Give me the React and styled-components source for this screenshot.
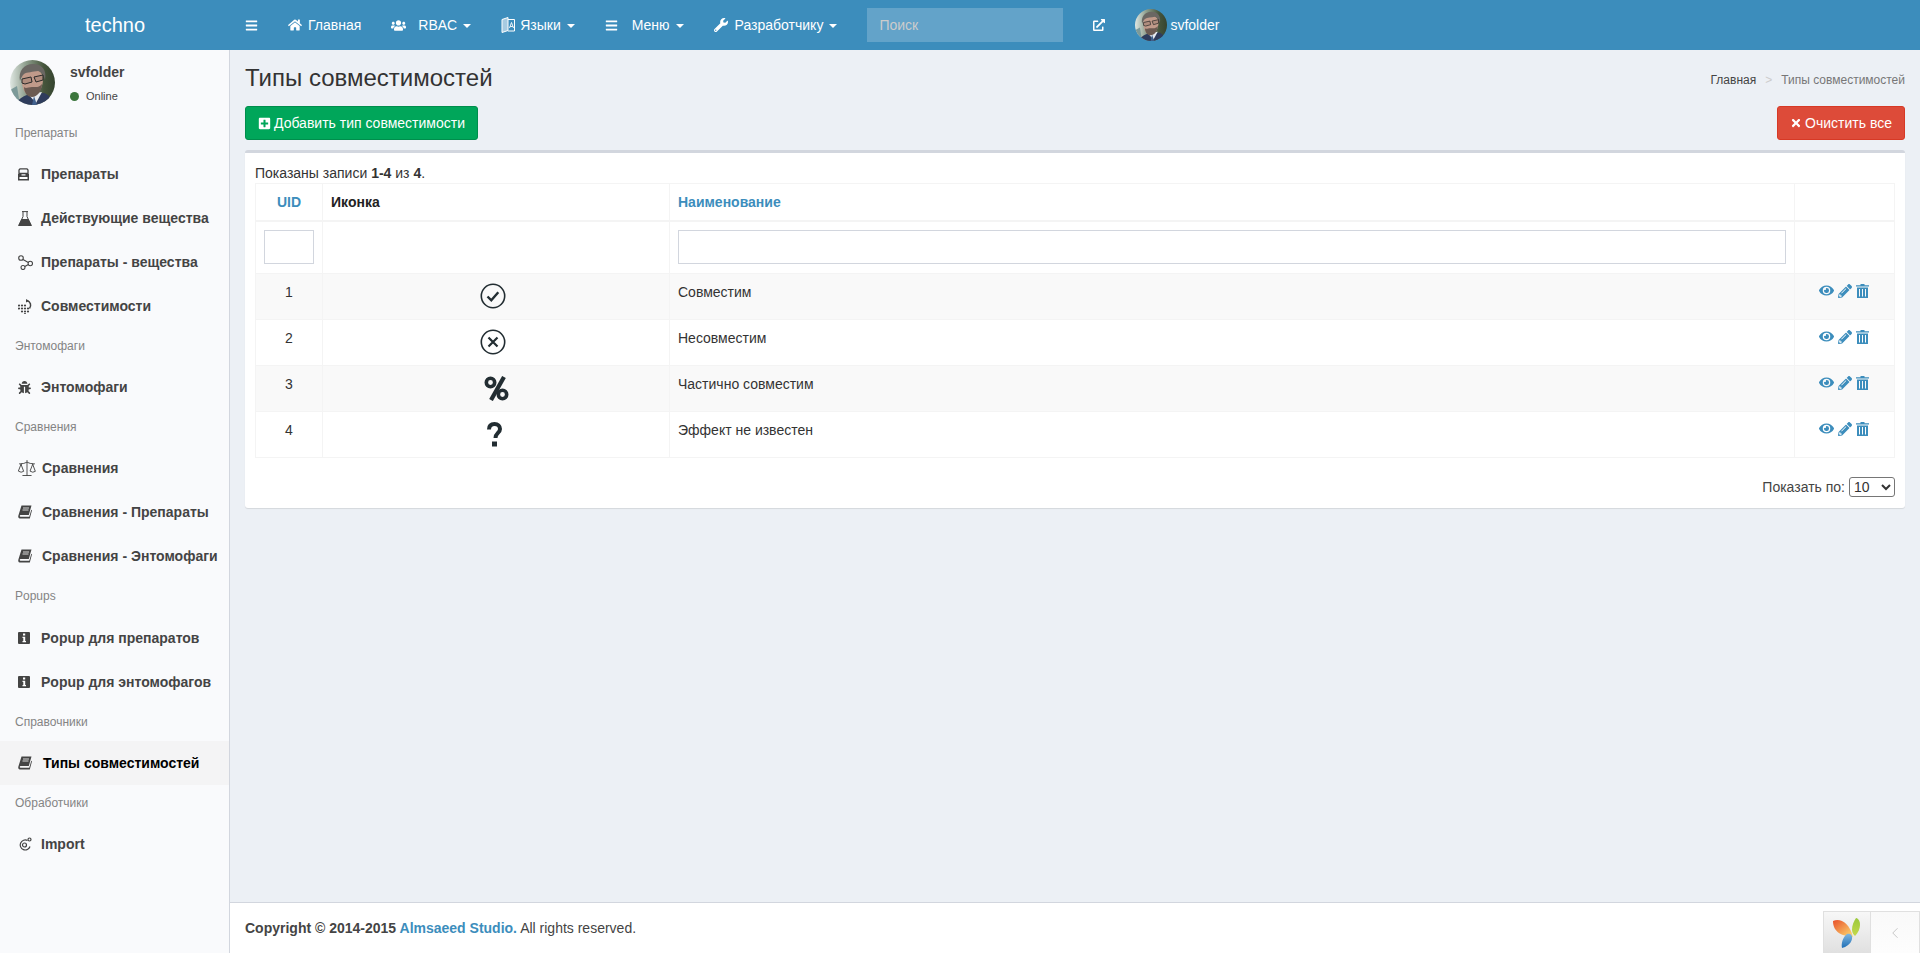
import React from "react";
import styled, { createGlobalStyle } from "styled-components";
import {
  FaBars,
  FaBug,
  FaEye,
  FaExternalLinkAlt,
  FaHome,
  FaPencilAlt,
  FaPlusSquare,
  FaTimes,
  FaUsers,
  FaWrench,
} from "react-icons/fa";
import { ChevronLeft, Scale } from "lucide-react";

const GlobalStyle = createGlobalStyle`
  * { box-sizing: border-box; }
  html, body { height: 100%; }
  body {
    margin: 0;
    background: #ecf0f5;
    color: #333;
    font-family: "Liberation Sans", Arial, sans-serif;
    font-size: 14px;
    line-height: 20px;
  }
`;

const Page = styled.div`
  display: flex;
  flex-direction: column;
  min-height: 953px;
`;

/* top bar */
const Header = styled.header`
  display: flex;
  align-items: center;
  height: 50px;
  background: #3c8dbc;
  color: #fff;
`;
const Logo = styled.div`
  width: 230px;
  text-align: center;
  font-size: 20px;
`;
const Toggle = styled.a`
  display: flex;
  padding: 15px;
  font-size: 14px;
`;
const NavLink = styled.a`
  display: flex;
  align-items: center;
  height: 50px;
  padding: 0 15px;
  color: #fff;
  svg { flex: none; }
`;
const NavIcon = styled.span`
  display: flex;
  width: ${(p) => p.$w}px;
  font-size: 14px;
`;
const Caret = styled.i`
  width: 0;
  height: 0;
  margin-left: 6px;
  margin-top: 2px;
  border-top: 4px solid #fff;
  border-left: 4px solid transparent;
  border-right: 4px solid transparent;
`;
const Search = styled.input`
  width: 196px;
  height: 34px;
  margin: 0 15px;
  padding: 6px 12px;
  border: 0;
  outline: 0;
  background: rgba(255, 255, 255, 0.2);
  color: #fff;
  font: 14px "Liberation Sans", Arial, sans-serif;
  &::placeholder { color: #ccc; opacity: 1; }
`;
const UserLink = styled(NavLink)`
  gap: 3px;
`;

/* body */
const Body = styled.div`
  display: flex;
  flex: 1;
`;
const Sidebar = styled.aside`
  flex: none;
  width: 230px;
  background: #f9fafc;
  border-right: 1px solid #d2d6de;
`;
const UserPanel = styled.div`
  display: flex;
  height: 65px;
  padding: 10px;
`;
const UserInfo = styled.div`
  margin: 2px 0 0 15px;
`;
const UserName = styled.div`
  color: #444;
  font-weight: 700;
`;
const Status = styled.div`
  display: flex;
  align-items: center;
  gap: 7px;
  margin-top: 4px;
  color: #444;
  font-size: 11px;
`;
const Dot = styled.i`
  width: 9px;
  height: 9px;
  border-radius: 50%;
  background: #3c763d;
`;
const GroupLabel = styled.div`
  height: 37.14px;
  padding: 10px 15px;
  color: #848484;
  font-size: 12px;
  line-height: 17px;
`;
const MenuItem = styled.a`
  display: flex;
  align-items: center;
  height: 44px;
  padding-left: 18px;
  color: ${(p) => (p.$active ? "#000" : "#444")};
  background: ${(p) => (p.$active ? "#f4f4f5" : "transparent")};
  font-weight: 700;
  white-space: nowrap;
`;
const MenuIcon = styled.span`
  display: flex;
  flex: none;
  align-items: center;
  width: ${(p) => p.$w || 23}px;
  color: #444;
  font-size: 14px;
`;
const ScaleIcon = styled(Scale)`
  flex: none;
  margin-left: -1px;
`;

const Main = styled.div`
  display: flex;
  flex: 1;
  flex-direction: column;
  min-width: 0;
`;
const Content = styled.main`
  flex: 1;
  padding: 15px 15px 0;
`;
const TitleRow = styled.div`
  display: flex;
  align-items: center;
  justify-content: space-between;
  height: 26px;
`;
const Title = styled.h1`
  margin: 0;
  color: #333;
  font-size: 24px;
  font-weight: 400;
  line-height: 26px;
`;
const Crumbs = styled.div`
  display: flex;
  gap: 9px;
  margin-top: 3px;
  color: #777;
  font-size: 12px;
  a { color: #444; }
  i { color: #ccc; font-style: normal; }
`;
const Actions = styled.div`
  display: flex;
  justify-content: space-between;
  margin: 15px 0 10px;
`;
const Button = styled.a`
  display: flex;
  align-items: center;
  gap: 3px;
  height: 34px;
  padding: 0 12px;
  border: 1px solid ${(p) => p.$border};
  border-radius: 3px;
  background: ${(p) => p.$bg};
  color: #fff;
`;
const Box = styled.section`
  height: 358px;
  padding: 10px;
  border-top: 3px solid #d2d6de;
  border-radius: 3px;
  background: #fff;
  box-shadow: 0 1px 1px rgba(0, 0, 0, 0.1);
`;
const Table = styled.table`
  width: 100%;
  table-layout: fixed;
  border-collapse: collapse;
  margin-bottom: 19px;
  th, td {
    padding: 8px;
    border: 1px solid #f4f4f4;
    vertical-align: top;
    text-align: left;
  }
  thead tr:first-child th { border-bottom-width: 2px; }
  tbody tr:nth-child(odd) { background: #f9f9f9; }
`;
const Th = styled.th`
  width: ${(p) => p.$w}px;
  color: ${(p) => (p.$link ? "#3c8dbc" : "#222")};
  && { text-align: ${(p) => (p.$center ? "center" : "left")}; }
`;
const NumCell = styled.td`
  && { text-align: center; }
`;
const FilterCell = styled.td`
  && { padding-bottom: 9px; }
`;
const FilterInput = styled.input`
  display: block;
  width: 100%;
  height: 34px;
  border: 1px solid #d2d6de;
  outline: 0;
  background: #fff;
`;
const IconCell = styled.td`
  && { padding: 8px 8px 9px; }
`;
const IconWrap = styled.div`
  display: flex;
  align-items: center;
  justify-content: center;
  width: 30px;
  height: 28px;
  margin-left: ${(p) => p.$left}px;
  color: #222d32;
`;
const RowActions = styled.div`
  display: flex;
  align-items: center;
  justify-content: center;
  gap: 4px;
  height: 17px;
  padding-right: 1px;
  color: #3c8dbc;
`;
const PageSize = styled.div`
  display: flex;
  align-items: center;
  justify-content: flex-end;
  gap: 4px;
  color: #444;
`;
const SizeSelect = styled.select`
  width: 46px;
  height: 20px;
  padding: 0;
  border: 1px solid #767676;
  border-radius: 3px;
  background: #fff;
  color: #333;
  font: 14px "Liberation Sans", Arial, sans-serif;
`;
const Footer = styled.footer`
  height: 51px;
  padding: 15px;
  border-top: 1px solid #d2d6de;
  background: #fff;
  color: #444;
  b a { color: #3c8dbc; }
`;

/* yii debug toolbar, sits over the footer */
const DebugBar = styled.div`
  position: fixed;
  right: 0;
  bottom: 0;
  display: flex;
  height: 42px;
  border: 1px solid #e0e0e0;
  border-bottom: 0;
  background: linear-gradient(#f9f9f9, #fdfdfd);
`;
const DebugLogo = styled.div`
  display: flex;
  align-items: center;
  justify-content: center;
  width: 47px;
  border-right: 1px solid #e0e0e0;
  background: linear-gradient(#f7f7f7, #e0e0e0);
`;
const DebugToggle = styled.div`
  display: flex;
  align-items: center;
  justify-content: center;
  width: 48px;
  color: #b5b5b5;
`;

const Avatar = ({ size }) => (
  <svg width={size} height={size} viewBox="0 0 45 45" style={{ flex: "none" }}>
    <defs>
      <clipPath id={`av${size}`}>
        <circle cx="22.5" cy="22.5" r="22.5" />
      </clipPath>
      <linearGradient id={`avbg${size}`} x1="0" x2="1" y1="0" y2="0">
        <stop offset="0" stopColor="#dfe7e2" />
        <stop offset="0.35" stopColor="#8f9f8e" />
        <stop offset="0.75" stopColor="#46553c" />
        <stop offset="1" stopColor="#35442f" />
      </linearGradient>
    </defs>
    <g clipPath={`url(#av${size})`}>
      <rect width="45" height="45" fill={`url(#avbg${size})`} />
      <path d="M0 30l7-4 3 19h-10z" fill="#7d9a99" />
      <path d="M6 45c2-7 8-9 14-11l14-1c5 2 8 5 9 12z" fill="#2f3c5c" />
      <path d="M18 34l8 9 6-11z" fill="#e6eaf0" />
      <path d="M24 36l3 9h-5z" fill="#41618e" />
      <path d="M12 17c0-6 6-9 12-8s10 5 9 12c-1 8-5 15-11 15-7 0-11-8-10-19z" fill="#c09a8a" />
      <path d="M10 21c-2-10 4-17 13-17s14 6 12 16c-1-4-3-8-7-9-5 1-11 1-14 3-2 2-3 4-4 7z" fill="#6a6763" />
      <path d="M14 27c2 2 4 0 8 0s7 1 10-3c0 7-5 13-10 13-5 0-8-5-8-10z" fill="#6b5a52" />
      <path d="M12 19l9-2 1 5-7 2-3-1zM24 17l9-2v5l-7 2z" fill="#b08d7e" stroke="#2a2a2a" strokeWidth="1" />
    </g>
  </svg>
);

const PillsIcon = () => (
  <svg width="11" height="13" viewBox="0 0 11 13">
    <path d="M2 .8h7l1 1.200v3.500h-9v-3.500z" fill="none" stroke="#444" strokeWidth="1.300" />
    <path d="M0 6h3.500v1.500h4v-1.500h3.500v6.500h-11z" fill="#444" />
    <rect x="1.500" y="9" width="8" height="2" fill="#fff" />
  </svg>
);
const FlaskIcon = () => (
  <svg width="14" height="15" viewBox="0 0 14 15">
    <path d="M4 .6h6M5 .6v5l-4 8.500h12l-4-8.500v-5" fill="none" stroke="#444" strokeWidth="1" />
    <path d="M3.500 8h7l3.500 7h-14z" fill="#444" />
  </svg>
);
const NodesIcon = () => (
  <svg width="15" height="15" viewBox="0 0 15 15" fill="none" stroke="#444" strokeWidth="1.100">
    <circle cx="3" cy="3" r="2.300" />
    <circle cx="12.300" cy="8.500" r="2.200" />
    <circle cx="5" cy="12.500" r="2" />
    <path d="M5 4.500l5.300 3M6.800 11.500l3.600-2" />
  </svg>
);
const DotsIcon = () => (
  <svg width="15" height="15" viewBox="0 0 15 15" fill="#444">
    {[
      [1, 6.500], [1, 9.500], [4, 6.500], [4, 9.500], [4, 12.500], [7, 6.500], [7, 9.500],
      [7, 12.500], [10, 9.500], [7, 15], [10, 12.500],
    ].map(([x, y]) => (
      <circle key={`${x}-${y}`} cx={x} cy={y} r="1.100" />
    ))}
    <path d="M9 1.500a5 5 0 0 1 2.500 8" fill="none" stroke="#444" strokeWidth="1.500" />
    <path d="M8 0v3.500l3-1.500z" />
  </svg>
);
const BookIcon = () => (
  <svg width="14" height="14" viewBox="0 0 14 14" fill="#444">
    <path d="M3.500.500h10l-2.700 9.500h-8.300c-.9 0-1 1.700 0 1.700h8.800l2-7 .7.500-2.200 8.300h-10c-1.500 0-1.800-1.800-1.400-3z" />
    <path d="M5 3h6M4.500 5h6" stroke="#fff" strokeWidth=".8" />
  </svg>
);
const InfoIcon = () => (
  <svg width="12" height="12" viewBox="0 0 12 12">
    <rect width="12" height="12" rx="1" fill="#444" />
    <path d="M5 1.500h2.200v2h-2.200zM4.500 4.700h2.700v4.300h.8v1.300h-3.500v-1.300h.8v-3h-.8z" fill="#fff" />
  </svg>
);
const ImportIcon = () => (
  <svg width="14" height="14" viewBox="0 0 14 14" fill="none" stroke="#444" strokeWidth="1.200">
    <path d="M9.500 3.500a5 5 0 1 0 2.500 6" />
    <circle cx="6.500" cy="8" r="2" />
    <circle cx="11.500" cy="2.500" r="1.500" />
  </svg>
);
const LanguageIcon = () => (
  <svg width="14" height="16" viewBox="0 0 14 16" fill="none" stroke="#fff">
    <path d="M1 2.500l6-2v13l-6 2z" fill="rgba(255,255,255,.55)" />
    <path d="M7 2.500h6.500v11.500h-6.500" />
    <path d="M8.500 11l2-5.500 2 5.500M9.200 9.500h2.600" strokeWidth=".9" />
  </svg>
);
const TrashIcon = () => (
  <svg width="13" height="14" viewBox="0 0 13 14" fill="#3c8dbc">
    <path d="M4.500 0h4v1.200h4.500v1.300h-13v-1.200h4.500z" />
    <path d="M1 3.500h11v10.500h-11zM3 5v7.500h1v-7.500zM6 5v7.500h1v-7.500zM9 5v7.500h1v-7.500z" fillRule="evenodd" />
  </svg>
);
const CheckCircle = () => (
  <svg width="26" height="26" viewBox="0 0 26 26" fill="none" stroke="currentColor">
    <circle cx="13" cy="13" r="11.700" strokeWidth="1.600" />
    <path d="M7.500 13.500l3.800 3.800 7-8" strokeWidth="2.400" />
  </svg>
);
const CrossCircle = () => (
  <svg width="26" height="26" viewBox="0 0 26 26" fill="none" stroke="currentColor">
    <circle cx="13" cy="13" r="11.700" strokeWidth="1.600" />
    <path d="M8.500 8.500l9 9M17.500 8.500l-9 9" strokeWidth="2.200" />
  </svg>
);
const PercentIcon = () => (
  <svg width="25" height="25" viewBox="0 0 25 25" fill="none" stroke="currentColor">
    <circle cx="6.500" cy="6.500" r="4.200" strokeWidth="3.600" />
    <circle cx="18.500" cy="18.500" r="4.200" strokeWidth="3.600" />
    <path d="M20 1l-13 23" strokeWidth="4.200" />
  </svg>
);
const QuestionIcon = () => (
  <svg width="15" height="25" viewBox="0 0 15 25" fill="none" stroke="currentColor">
    <path d="M2 7.500c0-4 2.500-5.500 5.500-5.500 3.500 0 5.500 2 5.500 5 0 4-4.500 4-4.500 9" strokeWidth="4" />
    <path d="M5 19.500h5v5h-5z" fill="currentColor" stroke="none" />
  </svg>
);
const YiiLogo = () => (
  <svg width="28" height="30" viewBox="0 0 28 30">
    <defs>
      <linearGradient id="yiiOrange" x1="0" x2="1" y1="0" y2="1">
        <stop offset="0" stopColor="#e8502a" />
        <stop offset="1" stopColor="#fde074" />
      </linearGradient>
      <linearGradient id="yiiGreen" x1="0" x2="0" y1="0" y2="1">
        <stop offset="0" stopColor="#9bc93c" />
        <stop offset="1" stopColor="#c4d94a" />
      </linearGradient>
      <linearGradient id="yiiBlue" x1="0" x2="0" y1="0" y2="1">
        <stop offset="0" stopColor="#7fb7e0" />
        <stop offset="1" stopColor="#1f6fb6" />
      </linearGradient>
    </defs>
    <path d="M0 3c7-3 16 1 20 16-10-1-20-4-20-16z" fill="url(#yiiOrange)" />
    <path d="M23 0c5 1 6 11-1 18-5-4-3-12 1-18z" fill="url(#yiiGreen)" />
    <path d="M14 16c3-1 6 1 5 5-1 5-6 8-10 9-1-5 1-11 5-14z" fill="url(#yiiBlue)" />
  </svg>
);

const menu = [
  {
    label: "Препараты",
    items: [
      { text: "Препараты", icon: <PillsIcon /> },
      { text: "Действующие вещества", icon: <FlaskIcon /> },
      { text: "Препараты - вещества", icon: <NodesIcon /> },
      { text: "Совместимости", icon: <DotsIcon /> },
    ],
  },
  { label: "Энтомофаги", items: [{ text: "Энтомофаги", icon: <FaBug size={13} /> }] },
  {
    label: "Сравнения",
    items: [
      { text: "Сравнения", icon: <ScaleIcon size={20} strokeWidth={1.1} />, w: 24 },
      { text: "Сравнения - Препараты", icon: <BookIcon />, w: 24 },
      { text: "Сравнения - Энтомофаги", icon: <BookIcon />, w: 24 },
    ],
  },
  {
    label: "Popups",
    items: [
      { text: "Popup для препаратов", icon: <InfoIcon /> },
      { text: "Popup для энтомофагов", icon: <InfoIcon /> },
    ],
  },
  {
    label: "Справочники",
    items: [{ text: "Типы совместимостей", icon: <BookIcon />, w: 25, active: true }],
  },
  { label: "Обработчики", items: [{ text: "Import", icon: <ImportIcon /> }] },
];

const rows = [
  { id: 1, name: "Совместим", icon: <CheckCircle />, left: 147 },
  { id: 2, name: "Несовместим", icon: <CrossCircle />, left: 147 },
  { id: 3, name: "Частично совместим", icon: <PercentIcon />, left: 150 },
  { id: 4, name: "Эффект не известен", icon: <QuestionIcon />, left: 148 },
];

export default function App() {
  return (
    <Page>
      <GlobalStyle />
      <Header>
        <Logo>techno</Logo>
        <Toggle>
          <FaBars size={13} />
        </Toggle>
        <NavLink>
          <NavIcon $w={20}><FaHome size={14} /></NavIcon>Главная
        </NavLink>
        <NavLink>
          <NavIcon $w={27}><FaUsers size={15} /></NavIcon>RBAC<Caret />
        </NavLink>
        <NavLink>
          <NavIcon $w={19}><LanguageIcon /></NavIcon>Языки<Caret />
        </NavLink>
        <NavLink>
          <NavIcon $w={27}><FaBars size={13} /></NavIcon>Меню<Caret />
        </NavLink>
        <NavLink>
          <NavIcon $w={21}><FaWrench size={14} /></NavIcon>Разработчику<Caret />
        </NavLink>
        <Search placeholder="Поиск" />
        <NavLink>
          <FaExternalLinkAlt size={12} />
        </NavLink>
        <UserLink>
          <Avatar size={32} />
          svfolder
        </UserLink>
      </Header>
      <Body>
        <Sidebar>
          <UserPanel>
            <Avatar size={45} />
            <UserInfo>
              <UserName>svfolder</UserName>
              <Status>
                <Dot />
                Online
              </Status>
            </UserInfo>
          </UserPanel>
          {menu.map((group) => (
            <React.Fragment key={group.label}>
              <GroupLabel>{group.label}</GroupLabel>
              {group.items.map((item) => (
                <MenuItem key={item.text} $active={item.active}>
                  <MenuIcon $w={item.w}>{item.icon}</MenuIcon>
                  {item.text}
                </MenuItem>
              ))}
            </React.Fragment>
          ))}
        </Sidebar>
        <Main>
          <Content>
            <TitleRow>
              <Title>Типы совместимостей</Title>
              <Crumbs>
                <a>Главная</a>
                <i>&gt;</i>
                <span>Типы совместимостей</span>
              </Crumbs>
            </TitleRow>
            <Actions>
              <Button $bg="#00a65a" $border="#008d4c">
                <FaPlusSquare size={13} />
                Добавить тип совместимости
              </Button>
              <Button $bg="#dd4b39" $border="#d73925">
                <FaTimes size={12} />
                Очистить все
              </Button>
            </Actions>
            <Box>
              <div>
                Показаны записи <b>1-4</b> из <b>4</b>.
              </div>
              <Table>
                <thead>
                  <tr>
                    <Th $w={67} $link $center>UID</Th>
                    <Th $w={347}>Иконка</Th>
                    <Th $link>Наименование</Th>
                    <Th $w={100} />
                  </tr>
                  <tr>
                    <FilterCell><FilterInput /></FilterCell>
                    <FilterCell />
                    <FilterCell><FilterInput /></FilterCell>
                    <FilterCell />
                  </tr>
                </thead>
                <tbody>
                  {rows.map((row) => (
                    <tr key={row.id}>
                      <NumCell>{row.id}</NumCell>
                      <IconCell>
                        <IconWrap $left={row.left}>{row.icon}</IconWrap>
                      </IconCell>
                      <td>{row.name}</td>
                      <td>
                        <RowActions>
                          <FaEye size={15} />
                          <FaPencilAlt size={14} />
                          <TrashIcon />
                        </RowActions>
                      </td>
                    </tr>
                  ))}
                </tbody>
              </Table>
              <PageSize>
                Показать по:
                <SizeSelect defaultValue="10">
                  <option>10</option>
                  <option>25</option>
                  <option>50</option>
                </SizeSelect>
              </PageSize>
            </Box>
          </Content>
          <Footer>
            <b>
              Copyright © 2014-2015 <a>Almsaeed Studio.</a>
            </b>{" "}
            All rights reserved.
          </Footer>
        </Main>
      </Body>
      <DebugBar>
        <DebugLogo>
          <YiiLogo />
        </DebugLogo>
        <DebugToggle>
          <ChevronLeft size={18} strokeWidth={1} />
        </DebugToggle>
      </DebugBar>
    </Page>
  );
}
